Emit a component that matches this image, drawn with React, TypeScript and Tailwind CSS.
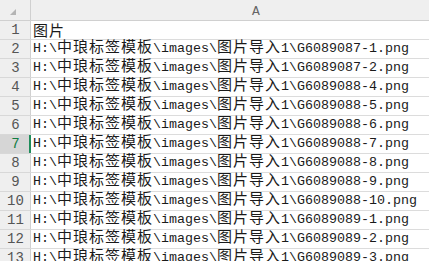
import React from 'react';

const base = 'H:\\中琅标签模板\\images\\图片导入1\\';

const rows: string[] = [
  '图片',
  base + 'G6089087-1.png',
  base + 'G6089087-2.png',
  base + 'G6089088-4.png',
  base + 'G6089088-5.png',
  base + 'G6089088-6.png',
  base + 'G6089088-7.png',
  base + 'G6089088-8.png',
  base + 'G6089088-9.png',
  base + 'G6089088-10.png',
  base + 'G6089089-1.png',
  base + 'G6089089-2.png',
  base + 'G6089089-3.png',
];

const activeRow = 7;

// split a cell value into ascii / cjk runs so each gets its own width
const splitRuns = (text: string) => {
  const runs: { cjk: boolean; text: string }[] = [];
  for (const ch of text) {
    const cjk = ch.charCodeAt(0) > 0x2e80;
    const last = runs[runs.length - 1];
    if (last && last.cjk === cjk) last.text += ch;
    else runs.push({ cjk, text: ch });
  }
  return runs;
};

const CellText: React.FC<{ value: string }> = ({ value }) => (
  <span className="whitespace-pre text-[#1a1a1a]">
    {splitRuns(value).map((run, i) =>
      run.cjk ? (
        <span
          key={i}
          className="text-[15px] tracking-[1px] font-['Noto_Sans_CJK_SC',sans-serif]"
        >
          {run.text}
        </span>
      ) : (
        <span key={i} className="text-[13.33px] font-['Liberation_Mono',monospace]">
          {run.text}
        </span>
      )
    )}
  </span>
);

export default function App() {
  return (
    <div className="w-[429px] h-[261px] overflow-hidden bg-white text-black">
      {/* Column header */}
      <div className="flex h-[21px] bg-[#efefef] border-b border-[#d0d0d0]">
        <div className="w-[31px] shrink-0 border-r border-[#d0d0d0] relative">
          <div className="absolute left-[10px] top-[9px] w-0 h-0 border-l-[6px] border-l-transparent border-b-[6px] border-b-[#b4b4b4]" />
        </div>
        <div className="w-[450px] shrink-0 flex items-center justify-center text-[13px] text-[#666] font-['Liberation_Mono',monospace] pt-[3px]">
          A
        </div>
      </div>

      {/* Rows */}
      {rows.map((value, idx) => {
        const n = idx + 1;
        const active = n === activeRow;
        return (
          <div key={n} className="flex h-[19px]">
            <div
              className={`w-[31px] shrink-0 flex items-center justify-center border-b border-[#d8d8d8] text-[14px] font-['Liberation_Mono',monospace] relative ${
                active ? 'bg-[#d6d6d6] text-[#107c41]' : 'bg-[#efefef] text-[#555]'
              }`}
            >
              {n}
              <div
                className={`absolute top-0 bottom-0 right-0 ${
                  active ? 'w-[2px] bg-[#1e8c5a]' : 'w-[1px] bg-[#d0d0d0]'
                }`}
              />
            </div>
            <div className="w-[450px] shrink-0 border-b border-[#dcdcdc] pl-[2px] flex items-end leading-[18px]">
              <CellText value={value} />
            </div>
          </div>
        );
      })}
    </div>
  );
}
